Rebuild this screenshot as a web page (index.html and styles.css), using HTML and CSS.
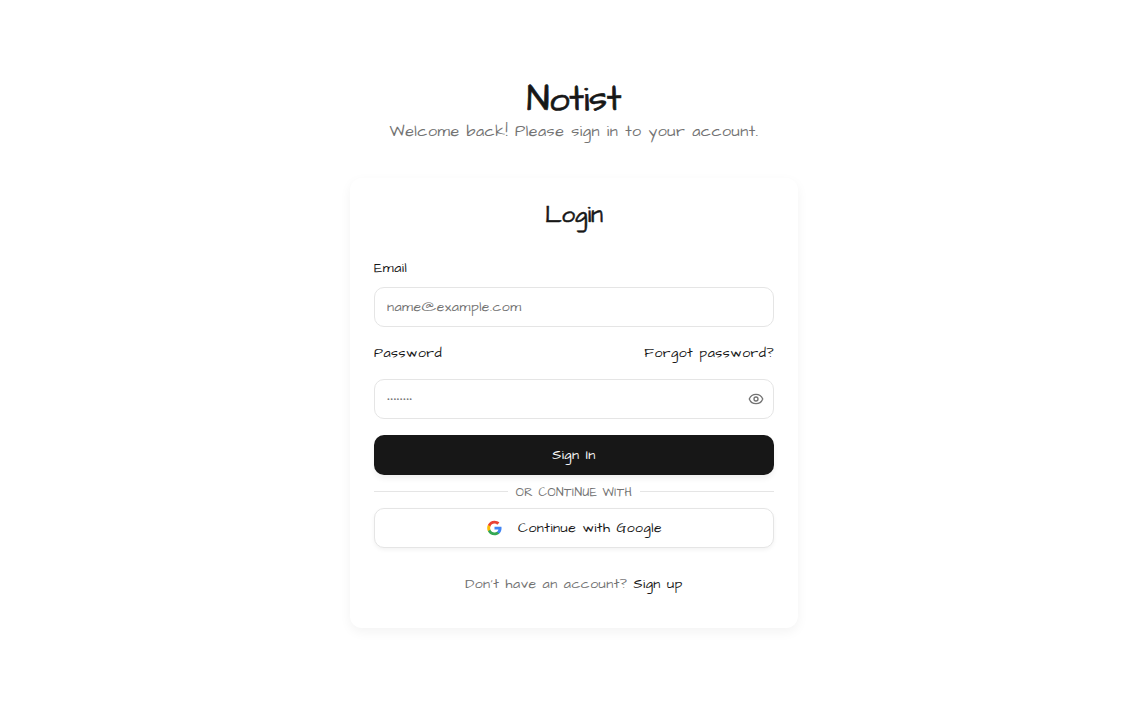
FILE: index.html
```html
<!DOCTYPE html>
<html lang="en">
<head>
  <meta charset="UTF-8">
  <meta name="viewport" content="width=device-width, initial-scale=1.0">
  <title>Notist - Login</title>
  <link rel="stylesheet" href="styles.css">
</head>
<body>
  <main class="page">
    <header class="brand">
      <h1>Notist</h1>
      <p>Welcome back! Please sign in to your account.</p>
    </header>

    <form class="card">
      <h2>Login</h2>

      <label class="field-label" for="email">Email</label>
      <input class="text-input" type="email" id="email" placeholder="name@example.com">

      <div class="label-row">
        <label class="field-label" for="password">Password</label>
        <a class="link" href="#">Forgot password?</a>
      </div>
      <div class="password-wrap">
        <input class="text-input" type="password" id="password" value="password">
        <button class="eye-btn" type="button" aria-label="Show password">
          <svg width="16" height="16" viewBox="0 0 24 24" fill="none" stroke="currentColor" stroke-width="2" stroke-linecap="round" stroke-linejoin="round">
            <path d="M2.062 12.348a1 1 0 0 1 0-.696 10.75 10.75 0 0 1 19.876 0 1 1 0 0 1 0 .696 10.75 10.75 0 0 1-19.876 0"/>
            <circle cx="12" cy="12" r="3"/>
          </svg>
        </button>
      </div>

      <button class="btn-primary" type="submit">Sign In</button>

      <div class="divider"><span>or continue with</span></div>

      <button class="btn-google" type="button">
        <svg class="google-icon" width="16" height="16" viewBox="0 0 24 24">
          <path fill="#4285F4" d="M22.56 12.25c0-.78-.07-1.53-.2-2.25H12v4.26h5.92c-.26 1.37-1.04 2.53-2.21 3.31v2.77h3.57c2.08-1.92 3.28-4.74 3.28-8.09z"/>
          <path fill="#34A853" d="M12 23c2.97 0 5.46-.98 7.28-2.66l-3.57-2.77c-.98.66-2.23 1.06-3.71 1.06-2.86 0-5.29-1.93-6.16-4.53H2.18v2.84C3.99 20.53 7.7 23 12 23z"/>
          <path fill="#FBBC05" d="M5.84 14.09c-.22-.66-.35-1.36-.35-2.09s.13-1.43.35-2.09V7.07H2.18C1.43 8.55 1 10.22 1 12s.43 3.45 1.18 4.93l3.66-2.84z"/>
          <path fill="#EA4335" d="M12 5.38c1.62 0 3.06.56 4.21 1.64l3.15-3.15C17.45 2.09 14.97 1 12 1 7.7 1 3.99 3.47 2.18 7.07l3.66 2.84c.87-2.6 3.3-4.53 6.16-4.53z"/>
        </svg>
        <span>Continue with Google</span>
      </button>

      <p class="signup">Don't have an account? <a class="link" href="#">Sign up</a></p>
    </form>
  </main>
</body>
</html>
```

FILE: styles.css
```css
* {
  box-sizing: border-box;
}
body {
  margin: 0;
  background: #fff;
  color: #171717;
  font-family: "Architects Daughter", "Lato", "Open Sans", sans-serif;
  letter-spacing: 0.5px;
}
.page {
  min-height: 706px;
  padding-top: 78px;
  display: flex;
  flex-direction: column;
  align-items: center;
}
.brand {
  text-align: center;
  height: 100px;
}
.brand h1 {
  margin: 2px 0 0;
  font-size: 36px;
  line-height: 40px;
  font-weight: 400;
  letter-spacing: -0.2px;
  -webkit-text-stroke: 0.7px #171717;
}
.brand p {
  margin: -1px 0 0;
  font-size: 16px;
  line-height: 24px;
  color: #737373;
}
.card {
  width: 448px;
  height: 450px;
  padding: 24px;
  background: #fff;
  border-radius: 12px;
  box-shadow: 0 4px 12px rgba(0, 0, 0, 0.05);
  display: flex;
  flex-direction: column;
}
.card h2 {
  margin: 1px 0 34px;
  text-align: center;
  font-size: 24px;
  line-height: 24px;
  font-weight: 400;
  letter-spacing: 0;
  -webkit-text-stroke: 0.5px #171717;
}
.field-label {
  display: block;
  font-size: 14px;
  line-height: 14px;
}
.card > .field-label {
  margin-bottom: 12px;
}
.text-input {
  width: 100%;
  height: 40px;
  padding: 0 12px;
  border: 1px solid #e5e5e5;
  border-radius: 10px;
  background: #fff;
  font: inherit;
  font-size: 14px;
  letter-spacing: 0.5px;
  color: #737373;
}
.text-input::placeholder {
  color: #737373;
}
.label-row {
  display: flex;
  justify-content: space-between;
  align-items: center;
  margin: 19px 0 19px;
  font-size: 14px;
  line-height: 14px;
}
.link {
  color: #171717;
  text-decoration: none;
}
.password-wrap {
  position: relative;
  margin-bottom: 16px;
}
.eye-btn {
  position: absolute;
  top: 12px;
  right: 10px;
  padding: 0;
  border: 0;
  background: none;
  color: #737373;
  display: flex;
}
.btn-primary,
.btn-google {
  width: 100%;
  height: 40px;
  border-radius: 10px;
  font: inherit;
  font-size: 14px;
  letter-spacing: 0.5px;
  display: flex;
  align-items: center;
  justify-content: center;
}
.btn-primary {
  border: 0;
  background: #171717;
  color: #fafafa;
  box-shadow: 0 4px 6px -1px rgba(0, 0, 0, 0.07);
}
.divider {
  display: flex;
  align-items: center;
  gap: 8px;
  height: 33px;
  font-size: 12px;
  line-height: 16px;
  text-transform: uppercase;
  color: #737373;
}
.divider span {
  margin-top: 2px;
}
.divider::before,
.divider::after {
  content: "";
  flex: 1;
  height: 1px;
  background: #e5e5e5;
}
.btn-google {
  gap: 16px;
  border: 1px solid #e5e5e5;
  background: #fff;
  color: #171717;
  box-shadow: 0 2px 4px rgba(0, 0, 0, 0.05);
}
.google-icon {
  transform: translateX(0.5px);
}
.signup {
  margin: 26px 0 0;
  text-align: center;
  font-size: 14px;
  line-height: 20px;
  color: #737373;
}
```
